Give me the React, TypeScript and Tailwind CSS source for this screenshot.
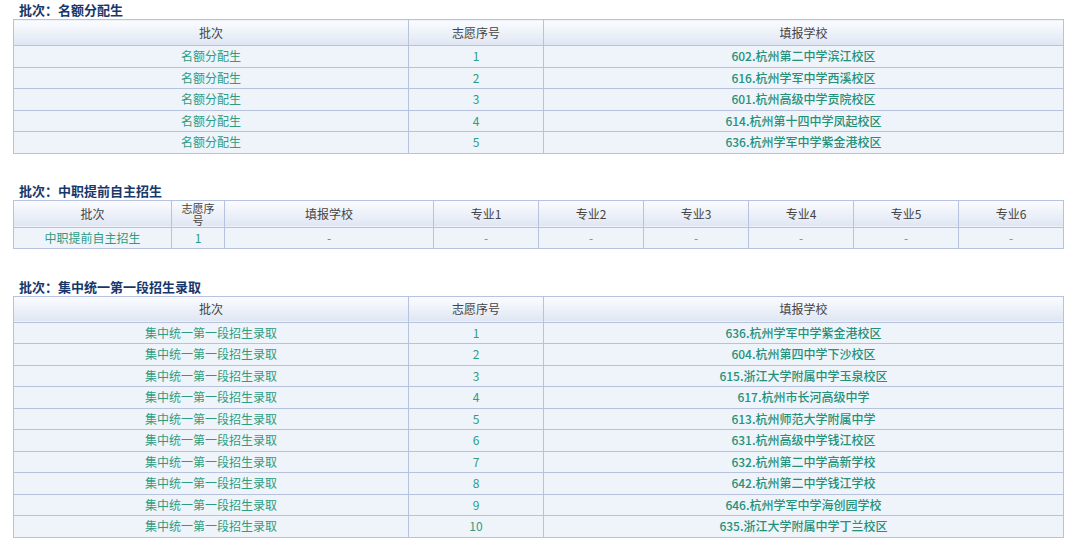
const font = { fontFamily: '"Noto Sans CJK SC", "Liberation Sans", sans-serif' };

const hd = 'border border-[#b7c3de] bg-gradient-to-b from-[#fbfcfe] to-[#dfe6f3] text-[#444] font-normal text-[12px]';
const td = 'border border-[#b7c3de] bg-[#eff4fb] text-[#2e9c80] text-[12px] text-center';

const a = ['602.杭州第二中学滨江校区', '616.杭州学军中学西溪校区', '601.杭州高级中学贡院校区', '614.杭州第十四中学凤起校区', '636.杭州学军中学紫金港校区'];
const c = ['636.杭州学军中学紫金港校区', '604.杭州第四中学下沙校区', '615.浙江大学附属中学玉泉校区', '617.杭州市长河高级中学', '613.杭州师范大学附属中学', '631.杭州高级中学钱江校区', '632.杭州第二中学高新学校', '642.杭州第二中学钱江学校', '646.杭州学军中学海创园学校', '635.浙江大学附属中学丁兰校区'];

function Title({ t }: { t: string }) {
  return <div className="pl-[19px] text-[13px] font-bold text-[#17386b] leading-[18px]">批次：{t}</div>;
}

function Simple({ name, list }: { name: string; list: string[] }) {
  return (
    <table className="ml-[13px] w-[1051px] border-collapse table-fixed">
      <colgroup><col className="w-[395px]" /><col className="w-[135px]" /><col /></colgroup>
      <thead>
        <tr className="h-[26px]"><th className={hd}>批次</th><th className={hd}>志愿序号</th><th className={hd}>填报学校</th></tr>
      </thead>
      <tbody>
        {list.map((s, i) => (
          <tr key={i} className="h-[21.5px]">
            <td className={td}>{name}</td>
            <td className={td}>{i + 1}</td>
            <td className={td + ' font-medium text-[#23917a]'}>{s}</td>
          </tr>
        ))}
      </tbody>
    </table>
  );
}

export default function App() {
  return (
    <div className="w-[1080px] h-[538px] bg-white overflow-hidden pt-[1px]" style={font}>
      <Title t="名额分配生" />
      <Simple name="名额分配生" list={a} />
      <div className="h-[28px]" />
      <Title t="中职提前自主招生" />
      <table className="ml-[13px] w-[1051px] border-collapse table-fixed">
        <colgroup>
          <col className="w-[158px]" /><col className="w-[53px]" /><col className="w-[209px]" />
          <col className="w-[105px]" /><col className="w-[105px]" /><col className="w-[105px]" /><col className="w-[105px]" /><col className="w-[105px]" /><col />
        </colgroup>
        <thead>
          <tr className="h-[27px]">
            <th className={hd}>批次</th>
            <th className={hd + ' !text-[11px] leading-[12px]'}>志愿序<br />号</th>
            <th className={hd}>填报学校</th>
            {[1, 2, 3, 4, 5, 6].map(n => <th key={n} className={hd}>专业{n}</th>)}
          </tr>
        </thead>
        <tbody>
          <tr className="h-[21px]">
            <td className={td}>中职提前自主招生</td>
            <td className={td}>1</td>
            {[0, 1, 2, 3, 4, 5, 6].map(n => <td key={n} className={td + (n ? ' text-[#888]' : '')}>-</td>)}
          </tr>
        </tbody>
      </table>
      <div className="h-[29px]" />
      <Title t="集中统一第一段招生录取" />
      <Simple name="集中统一第一段招生录取" list={c} />
    </div>
  );
}
